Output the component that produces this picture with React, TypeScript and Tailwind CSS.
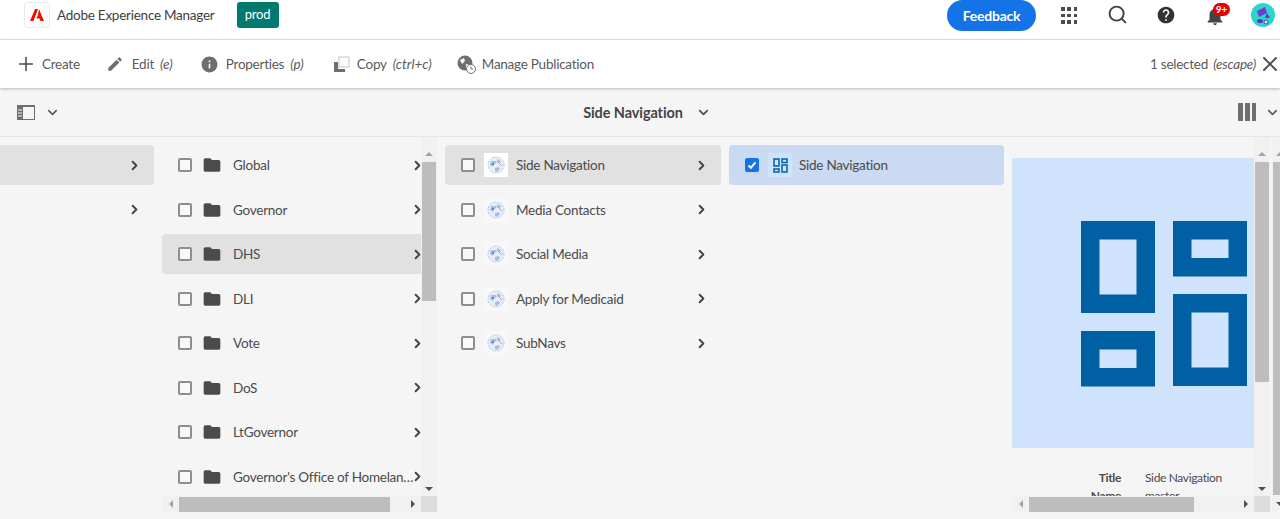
import { ChevronDown, ChevronRight, Plus, Search, X } from "lucide-react";
import { MdEdit, MdFolder, MdHelp, MdInfo, MdNotifications } from "react-icons/md";

const sites = ["Global", "Governor", "DHS", "DLI", "Vote", "DoS", "LtGovernor", "Governor's Office of Homeland Security"];
const navs = ["Side Navigation", "Media Contacts", "Social Media", "Apply for Medicaid", "SubNavs"];

function Globe({ white }: { white?: boolean }) {
  return (
    <div className={`flex h-6 w-6 shrink-0 items-center justify-center ${white ? "bg-white" : "bg-[#f8f8f8]"}`}>
      <svg width="18" height="18" viewBox="0 0 18 18">
        <circle cx="9" cy="9" r="8" fill="#e6eef9" stroke="#b3c8e6" strokeWidth="1" strokeDasharray="2 1" />
        <path d="M4 5h5l1 2-3 1-1 3-3-2zM10 3l4 2-1 2-3-1zM8 12l4-1 1 2-3 3-2-1z" fill="#a5bfe2" />
        <path d="M11 6l4 4" stroke="#e08a98" strokeWidth="1" />
        <rect x="5" y="7" width="2" height="2" fill="#5c84bb" />
      </svg>
    </div>
  );
}

function Box() {
  return <span className="h-[14px] w-[14px] shrink-0 rounded-[2px] border-2 border-[#8e8e8e] bg-[#f8f8f8]" />;
}

function SmallLayout() {
  return (
    <svg width="15" height="15" viewBox="0 0 15 15" fill="none" stroke="#0060a3" strokeWidth="1.5">
      <rect x="1" y="1" width="5" height="7" />
      <rect x="9" y="1" width="5" height="3.5" />
      <rect x="9" y="7" width="5" height="7" />
      <rect x="1" y="11" width="5" height="3" />
    </svg>
  );
}

function Arrow({ dir }: { dir: "up" | "down" | "left" | "right" }) {
  const cls = {
    up: "border-x-[4px] border-b-[4px] border-x-transparent border-b-[#a3a3a3]",
    down: "border-x-[4px] border-t-[4px] border-x-transparent border-t-[#505050]",
    left: "border-y-[4px] border-r-[4px] border-y-transparent border-r-[#a3a3a3]",
    right: "border-y-[4px] border-l-[4px] border-y-transparent border-l-[#505050]",
  }[dir];
  return <span className={`h-0 w-0 ${cls}`} />;
}

function VBar({ thumb }: { thumb: string }) {
  return (
    <div className="flex w-4 shrink-0 flex-col items-center bg-[#f1f1f1]">
      <div className="flex h-[25px] shrink-0 items-center justify-center pt-2"><Arrow dir="up" /></div>
      <div className="min-h-0 flex-1">
        <div className={`w-[14px] bg-[#bdbdbd] ${thumb}`} />
      </div>
      <div className="flex h-[15px] shrink-0 items-center justify-center"><Arrow dir="down" /></div>
    </div>
  );
}

function HBar({ width }: { width: string }) {
  return (
    <div className="flex h-4 items-center bg-[#f1f1f1]">
      <div className="flex w-[17px] shrink-0 justify-center"><Arrow dir="left" /></div>
      <div className="h-[15px] min-w-0 flex-1">
        <div className={`h-[15px] bg-[#bdbdbd] ${width}`} />
      </div>
      <div className="flex w-[17px] shrink-0 justify-center"><Arrow dir="right" /></div>
    </div>
  );
}

function Tool({ icon, label, hint, className }: { icon: React.ReactNode; label: string; hint?: string; className?: string }) {
  return (
    <div className={`flex items-center ${className ?? ""}`}>
      {icon}
      <span className="whitespace-nowrap">
        {label}
        {hint && <i className="ml-[6px] tracking-normal">{hint}</i>}
      </span>
    </div>
  );
}

export default function App() {
  return (
    <div className="h-[519px] w-[1280px] overflow-hidden bg-[#f5f5f5] text-[13.5px] tracking-[-0.25px] text-[#4b4b4b] [font-family:Lato,'Liberation_Sans',sans-serif]">
      {/* top bar */}
      <header className="flex h-10 items-start border-b border-[#e1e1e1] bg-white">
        <div className="ml-6 mt-[2px] flex h-[26px] w-[26px] items-center justify-center rounded-[4px] border border-[#e8e8e8]">
          <svg width="14" height="12" viewBox="0 0 14 12" fill="#eb1000">
            <path d="M5 0h3L3.5 12H0zM9 0l5 12h-3.5l-1-2.5h-3L8 6z" />
          </svg>
        </div>
        <span className="ml-[7px] mt-[5px] whitespace-nowrap text-[#3e3e3e]">Adobe Experience Manager</span>
        <span className="ml-[22px] mt-[2px] flex h-[26px] w-[42px] items-center justify-center rounded-[3px] bg-[#00796f] text-[13px] text-white">prod</span>
        <button className="ml-auto h-[31px] w-[89px] rounded-full bg-[#1473e6] text-[14px] font-bold text-white">Feedback</button>
        <div className="ml-[25px] mt-[7px] grid w-4 grid-cols-3 gap-[3px]">
          {Array.from({ length: 9 }).map((_, i) => (
            <span key={i} className="h-[3.5px] w-[3.5px] bg-[#4b4b4b]" />
          ))}
        </div>
        <Search className="ml-[30px] mt-[4px]" size={21} strokeWidth={2.2} color="#444" />
        <MdHelp className="ml-[28px] mt-[5px]" size={20} color="#333" />
        <div className="relative ml-[28px] mt-[5px] h-[22px] w-[22px]">
          <MdNotifications size={22} color="#444" />
          <span className="absolute -top-[2px] left-[9px] flex h-[13px] w-[17px] items-center justify-center rounded-full bg-[#e60000] text-[10px] font-bold tracking-normal text-white">9+</span>
        </div>
        <svg className="ml-[25px] mr-[5px] mt-[3px]" width="24" height="24" viewBox="0 0 24 24">
          <circle cx="12" cy="12" r="12" fill="#2fd3c9" />
          <path d="M6 8l8-4 2 6-8 4z" fill="#6a3fd6" />
          <path d="M16 10l3 5-5 0z" fill="#5b38c4" />
          <ellipse cx="9" cy="18" rx="3" ry="2" fill="#5b38c4" />
          <circle cx="15" cy="19" r="2" fill="#e8e4ff" stroke="#5b38c4" />
        </svg>
      </header>

      {/* action bar */}
      <div className="relative z-10 flex h-[48px] items-center bg-white pl-[19px] pr-[4px] text-[#5a5a5a] shadow-[0_1px_3px_rgba(0,0,0,0.25)]">
        <Tool icon={<Plus className="-ml-[4px] mr-[5px]" size={22} strokeWidth={1.7} color="#4b4b4b" />} label="Create" />
        <Tool className="ml-[26px]" icon={<MdEdit className="mr-[8px]" size={18} color="#6e6e6e" />} label="Edit" hint="(e)" />
        <Tool className="ml-[27px]" icon={<MdInfo className="mr-[7px]" size={19} color="#6e6e6e" />} label="Properties" hint="(p)" />
        <Tool
          className="ml-[29px]"
          icon={
            <svg className="mr-[7px]" width="17" height="17" viewBox="0 0 17 17">
              <rect x="6" y="1" width="10" height="10" fill="#fff" stroke="#c4c4c4" />
              <path d="M1 6h4v7h7v3H1z" fill="#6e6e6e" />
            </svg>
          }
          label="Copy"
          hint="(ctrl+c)"
        />
        <Tool
          className="ml-[25px]"
          icon={
            <svg className="mr-[6px]" width="19" height="19" viewBox="0 0 19 19">
              <circle cx="8" cy="8" r="7.5" fill="#6e6e6e" />
              <path d="M3 5l4-2 1 3-3 3zM9 9l4 1-2 4-2-1z" fill="#fff" />
              <circle cx="14" cy="14" r="4.5" fill="#fff" stroke="#6e6e6e" />
              <path d="M14 11.5V14h2" fill="none" stroke="#6e6e6e" />
            </svg>
          }
          label="Manage Publication"
        />
        <span className="ml-auto whitespace-nowrap">
          1 selected <i className="ml-[2px]">(escape)</i>
        </span>
        <X className="-mr-[6px] ml-[2px]" size={24} strokeWidth={1.9} color="#4b4b4b" />
      </div>

      {/* title bar */}
      <div className="flex h-[49px] items-center border-b border-[#e6e6e6] pl-[17px]">
        <svg width="18" height="15" viewBox="0 0 18 15">
          <rect x="0.5" y="0.5" width="17" height="14" fill="none" stroke="#6e6e6e" />
          <rect x="0" y="0" width="18" height="2" fill="#6e6e6e" />
          <rect x="0" y="2" width="6" height="13" fill="#6e6e6e" />
          <path d="M1 5h4M1 8h4M1 11h4" stroke="#f5f5f5" />
        </svg>
        <ChevronDown className="ml-[10px]" size={15} strokeWidth={2.4} color="#555" />
        <div className="flex flex-1 items-center justify-center pr-[4px]">
          <span className="pt-px text-[14.5px] font-bold tracking-[-0.1px] text-[#444]">Side Navigation</span>
          <ChevronDown className="ml-[13px]" size={15} strokeWidth={2.4} color="#444" />
        </div>
        <div className="mr-[9px] flex gap-[2px]">
          <span className="h-[18px] w-[5px] bg-[#6e6e6e]" />
          <span className="h-[18px] w-[5px] bg-[#6e6e6e]" />
          <span className="h-[18px] w-[4px] bg-[#6e6e6e]" />
        </div>
        <ChevronDown size={15} strokeWidth={2.4} color="#555" />
      </div>

      {/* miller columns */}
      <div className="flex h-[375px]">
        <div className="flex w-[154px] shrink-0 flex-col gap-[4.5px] pt-2">
          <div className="flex h-10 items-center justify-end rounded-r-[4px] bg-[#e1e1e1] pr-[12px]">
            <ChevronRight size={15} strokeWidth={3} color="#444" />
          </div>
          <div className="flex h-10 items-center justify-end pr-[12px]">
            <ChevronRight size={15} strokeWidth={3} color="#444" />
          </div>
        </div>

        <div className="ml-2 flex w-[275px] shrink-0 flex-col">
          <div className="flex h-[359px] overflow-hidden">
            <div className="flex w-[259px] flex-col gap-[4.5px] overflow-hidden pt-2">
              {sites.map((s) => (
                <div key={s} className={`flex h-10 shrink-0 items-center rounded-l-[4px] pl-4 ${s === "DHS" ? "bg-[#e1e1e1]" : ""}`}>
                  <Box />
                  <MdFolder className="ml-[10px] shrink-0" size={20} color="#4b4b4b" />
                  <span className="ml-[11px] w-[185px] shrink-0 truncate pt-px">{s}</span>
                  <ChevronRight className="-ml-[8px] shrink-0" size={15} strokeWidth={3} color="#444" />
                </div>
              ))}
            </div>
            <VBar thumb="h-[139px]" />
          </div>
          <div className="flex">
            <div className="flex-1"><HBar width="w-[211px]" /></div>
            <div className="h-4 w-4 bg-[#dcdcdc]" />
          </div>
        </div>

        <div className="ml-2 flex w-[276px] shrink-0 flex-col gap-[4.5px] pt-2">
          {navs.map((n, i) => (
            <div key={n} className={`flex h-10 items-center rounded-[4px] pl-4 pr-[12px] ${i === 0 ? "bg-[#e1e1e1]" : ""}`}>
              <Box />
              <span className="ml-[9px]"><Globe white={i === 0} /></span>
              <span className="ml-2 flex-1 pt-px">{n}</span>
              <ChevronRight size={15} strokeWidth={3} color="#444" />
            </div>
          ))}
        </div>

        <div className="ml-2 w-[275px] shrink-0 pt-2">
          <div className="flex h-10 items-center rounded-[4px] bg-[#c9daf2] pl-4">
            <span className="flex h-[14px] w-[14px] shrink-0 items-center justify-center rounded-[2px] bg-[#1473e6]">
              <svg width="10" height="10" viewBox="0 0 10 10" fill="none" stroke="#fff" strokeWidth="2">
                <path d="M1.5 5.5l2.3 2.3 4.7-5.5" />
              </svg>
            </span>
            <span className="ml-[9px] flex h-6 w-6 items-center justify-center bg-[#cfe3fc]"><SmallLayout /></span>
            <span className="ml-[7px] pt-px">Side Navigation</span>
          </div>
        </div>

        <div className="ml-2 flex min-w-0 flex-1 overflow-hidden">
          <div className="flex w-[258px] shrink-0 flex-col">
            <div className="flex h-[359px]">
              <div className="w-[242px] shrink-0 overflow-hidden pt-[21px]">
                <svg className="block" width="242" height="290" viewBox="0 0 242 290">
                  <rect width="242" height="290" fill="#cfe3fc" />
                  <g fill="none" stroke="#0060a3" strokeWidth="18.5">
                    <rect x="78.25" y="72.25" width="55.5" height="73.5" />
                    <rect x="170.25" y="72.25" width="55.5" height="37" />
                    <rect x="170.25" y="145.25" width="55.5" height="73.5" />
                    <rect x="78.25" y="182.25" width="55.5" height="37" />
                  </g>
                </svg>
                <div className="mt-[21px] grid grid-cols-[109px_1fr] gap-x-6 text-[12px] leading-[18px] tracking-[-0.35px]">
                  <span className="text-right font-bold">Title</span>
                  <span>Side Navigation</span>
                  <span className="text-right font-bold">Name</span>
                  <span>master</span>
                </div>
              </div>
              <VBar thumb="h-[220px]" />
            </div>
            <div className="flex">
              <div className="w-[242px]"><HBar width="w-[165px]" /></div>
              <div className="h-4 w-4 bg-[#dcdcdc]" />
            </div>
          </div>
          <div className="ml-[2px] flex-1 overflow-hidden">
            <div className="flex h-[375px] w-4 flex-col items-center bg-[#f1f1f1]">
              <div className="flex h-[25px] shrink-0 items-center justify-center pt-2"><Arrow dir="up" /></div>
              <div className="w-[14px] flex-1 bg-[#bdbdbd]" />
              <div className="flex h-[17px] shrink-0 items-center justify-center"><Arrow dir="down" /></div>
            </div>
          </div>
        </div>
      </div>
    </div>
  );
}
